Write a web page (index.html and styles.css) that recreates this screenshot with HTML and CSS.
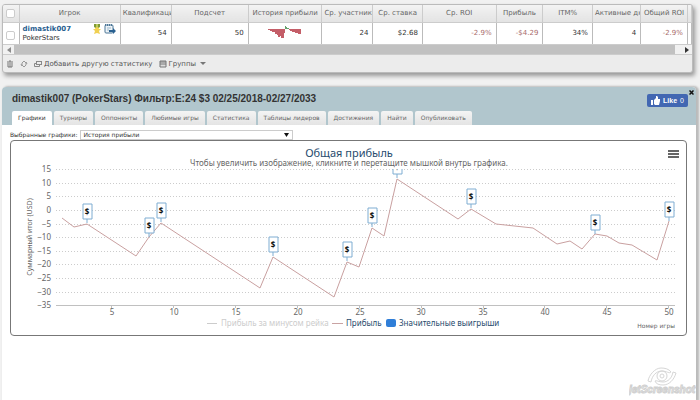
FILE: index.html
```html
<!DOCTYPE html>
<html lang="ru">
<head>
    <meta charset="UTF-8">
    <meta name="viewport" content="width=device-width, initial-scale=1.0">
    <title>dimastik007 (PokerStars)</title>
    <link rel="stylesheet" href="styles.css">
</head>
<body>
    <!-- Player grid -->
    <section class="grid-panel">
        <table class="grid">
            <colgroup>
                <col class="col-check"><col class="col-player"><col class="col-qual"><col class="col-count">
                <col class="col-history"><col class="col-entrants"><col class="col-stake"><col class="col-roi">
                <col class="col-profit"><col class="col-itm"><col class="col-active"><col class="col-total"><col>
            </colgroup>
            <thead>
                <tr>
                    <th><input class="tick" type="checkbox" aria-label="Выбрать все"></th>
                    <th>Игрок</th>
                    <th>Квалификация</th>
                    <th>Подсчет</th>
                    <th>История прибыли</th>
                    <th>Ср. участников</th>
                    <th>Ср. ставка</th>
                    <th>Ср. ROI</th>
                    <th>Прибыль</th>
                    <th>ITM%</th>
                    <th>Активные дни</th>
                    <th>Общий ROI</th>
                    <th></th>
                </tr>
            </thead>
            <tbody>
                <tr>
                    <td class="check"><input class="tick" type="checkbox" aria-label="Выбрать dimastik007"></td>
                    <td class="player">
                        <div class="player-top">
                            <a class="player-name" href="#">dimastik007</a>
                            <svg class="medal" viewBox="0 0 8 10">
                                <path d="M1 0h6v3L4 5 1 3z" fill="#7f9a35"/>
                                <path d="M3 0h2v3H3z" fill="#b9c95e"/>
                                <circle cx="4" cy="5" r="2" fill="#f5d94e"/>
                                <path d="M4 4l1 1 3 0-2 2 1 3-3-1-3 1 1-3-2-2h3z" fill="#f0d052"/>
                            </svg>
                            <svg class="export" viewBox="0 0 12 10">
                                <rect x="1" y="1" width="8" height="8" rx="1" fill="#eef4f8" stroke="#4d7797"/>
                                <path d="M1 1h8" stroke="#4d7797" stroke-width="2" stroke-dasharray="1 1"/>
                                <path d="M3 4h4M3 6h2" stroke="#9db9cb"/>
                                <path d="M5 6h4V4l3 3-3 3V8H5z" fill="#2a6191"/>
                            </svg>
                        </div>
                        <div class="site">PokerStars</div>
                    </td>
                    <td>54</td>
                    <td>50</td>
                    <td class="spark-cell">
                        <svg class="spark" viewBox="0 0 34 13">
                            <path d="M0 3h17v4h-1v5h-3v-2h-1v1h-2V9H9V8H7V6H4V5H2V4H0zM21 3h12v5h-3V7h-3V6h-3V5h-2V4h-1z" fill="#c45e68"/>
                            <path d="M17 3V0h1v1h1v1h2v1z" fill="#67a06d"/>
                        </svg>
                    </td>
                    <td>24</td>
                    <td>$2.68</td>
                    <td class="loss">-2.9%</td>
                    <td class="loss">-$4.29</td>
                    <td>34%</td>
                    <td>4</td>
                    <td class="loss">-2.9%</td>
                    <td></td>
                </tr>
            </tbody>
        </table>
        <div class="scrollbar">
            <button class="scroll-btn" type="button" aria-label="Влево"><svg viewBox="0 0 4 6"><path d="M4 0v6L0 3z" fill="#8c8c8c"/></svg></button>
            <div class="scroll-thumb"></div>
            <button class="scroll-btn" type="button" aria-label="Вправо"><svg viewBox="0 0 4 6"><path d="M0 0v6l4-3z" fill="#333"/></svg></button>
        </div>
        <div class="grid-tools">
            <button class="tool" type="button" aria-label="Удалить">
                <svg class="tool-icon" viewBox="0 0 8 8"><path d="M1 2h6M3 1h2M2 3v4h4V3M4 3v4" fill="none" stroke="#777"/></svg>
            </button>
            <button class="tool" type="button" aria-label="Обновить">
                <svg class="tool-icon" viewBox="0 0 8 8"><path d="M2 6V3l2-2 1 1M6 2v3L4 7 3 6M1 4l1 2 1-1M5 3l1-1 1 2" fill="none" stroke="#999"/></svg>
            </button>
            <button class="tool" type="button">
                <svg class="tool-icon" viewBox="0 0 8 8"><rect x="2.5" y="1.5" width="5" height="3" fill="none" stroke="#888"/><path d="M2 3.500H.5v3h5V5" fill="none" stroke="#888"/></svg>
                Добавить другую статистику
            </button>
            <button class="tool groups" type="button">
                <svg class="tool-icon" viewBox="0 0 8 8"><path d="M1 1h6v6H1z" fill="#ddd" stroke="#777"/><path d="M1 2h6M1 4h6" stroke="#777"/></svg>
                Группы
                <svg class="caret" viewBox="0 0 6 3"><path d="M0 0h6L3 3z" fill="#777"/></svg>
            </button>
        </div>
    </section>

    <!-- Player details -->
    <section class="detail-panel">
        <header class="detail-head">
            <button class="close" type="button" aria-label="Закрыть">
                <svg viewBox="0 0 5 5"><path d="M.5.5l4 4M4.500.5l-4 4" stroke="#111" stroke-width="1.500"/></svg>
            </button>
            <div class="title-row">
                <h1>dimastik007 (PokerStars) Фильтр:E:24 $3 02/25/2018-02/27/2033</h1>
                <button class="like" type="button">
                    <svg viewBox="0 0 9 9"><path d="M0 4h2v5H0zM3 4l2-2V0h1l1 1v2h2v2L8 9H4L3 8z" fill="#fff"/></svg>
                    <b>Like</b> 0
                </button>
            </div>
            <nav class="tabs">
                <a class="tab active" href="#">Графики</a>
                <a class="tab" href="#">Турниры</a>
                <a class="tab" href="#">Оппоненты</a>
                <a class="tab" href="#">Любимые игры</a>
                <a class="tab" href="#">Статистика</a>
                <a class="tab" href="#">Таблицы лидеров</a>
                <a class="tab" href="#">Достижения</a>
                <a class="tab" href="#">Найти</a>
                <a class="tab" href="#">Опубликовать</a>
            </nav>
        </header>

        <div class="chart-pick">
            <label for="chartSelect">Выбранные графики:</label>
            <select id="chartSelect" class="chart-select">
                <option>История прибыли</option>
            </select>
        </div>

        <!-- Profit chart -->
        <div class="chart-box">
            <button class="chart-menu" type="button" aria-label="Меню графика"><span></span><span></span><span></span></button>
            <svg class="chart" viewBox="0 0 675 194">
                <defs>
                    <clipPath id="plotArea"><rect x="44" y="28" width="631" height="137"/></clipPath>
                    <g id="flag">
                        <path class="flag-line" d="M0 0v-4M-4-19h9v15h-9z"/>
                        <text class="flag-text" x="0" y="-8">$</text>
                    </g>
                </defs>
                <text class="chart-title" x="338" y="16">Общая прибыль</text>
                <text class="chart-subtitle" x="338" y="25">Чтобы увеличить изображение, кликните и перетащите мышкой внутрь графика.</text>

                <path class="grid-line" d="M45 28.500h619M45 42.500h619M45 55.500h619M45 69.500h619M45 83.500h619M45 96.500h619M45 110.500h619M45 123.500h619M45 137.500h619M45 151.500h619"/>
                <path class="axis-line" d="M45 164.500h619M100.500 164v3M162.500 164v3M224.500 164v3M286.500 164v3M348.500 164v3M410.500 164v3M472.500 164v3M533.500 164v3M595.500 164v3M657.500 164v3"/>

                <g class="y-labels">
                    <text x="40" y="31">15</text>
                    <text x="40" y="45">10</text>
                    <text x="40" y="58">5</text>
                    <text x="40" y="72">0</text>
                    <text x="40" y="86">−5</text>
                    <text x="40" y="99">−10</text>
                    <text x="40" y="113">−15</text>
                    <text x="40" y="126">−20</text>
                    <text x="40" y="140">−25</text>
                    <text x="40" y="154">−30</text>
                    <text x="40" y="167">−35</text>
                </g>
                <g class="x-labels">
                    <text x="101" y="174">5</text>
                    <text x="163" y="174">10</text>
                    <text x="225" y="174">15</text>
                    <text x="287" y="174">20</text>
                    <text x="349" y="174">25</text>
                    <text x="410" y="174">30</text>
                    <text x="472" y="174">35</text>
                    <text x="534" y="174">40</text>
                    <text x="596" y="174">45</text>
                    <text x="658" y="174">50</text>
                </g>
                <text class="y-title" transform="translate(21 96) rotate(-90)">Суммарный итог (USD)</text>
                <text class="x-title" x="664" y="187">Номер игры</text>

                <g clip-path="url(#plotArea)">
                    <polyline class="profit-line" points="51,77 63,86 76,83 125,115 138,96 150,82 249,147 262,116 323,156 336,121 348,126 361,87 373,95 386,38 447,78 460,68 485,83 522,87 546,103 559,100 571,108 584,93 596,95 608,102 621,104 646,119 658,80"/>
                    <use href="#flag" x="76" y="82"/>
                    <use href="#flag" x="138" y="96"/>
                    <use href="#flag" x="150" y="81"/>
                    <use href="#flag" x="262" y="115"/>
                    <use href="#flag" x="336" y="120"/>
                    <use href="#flag" x="361" y="86"/>
                    <use href="#flag" x="386" y="37"/>
                    <use href="#flag" x="460" y="67"/>
                    <use href="#flag" x="584" y="93"/>
                    <use href="#flag" x="658" y="80"/>
                </g>

                <g class="legend">
                    <path d="M196 182.500h10" stroke="#ccc"/>
                    <text class="off" x="210" y="185">Прибыль за минусом рейка</text>
                    <path d="M321 182.500h11" stroke="#c9a3a3"/>
                    <text x="335" y="185">Прибыль</text>
                    <rect x="375" y="178" width="10" height="8" rx="2" fill="#2f7ed8"/>
                    <text x="388" y="185">Значительные выигрыши</text>
                </g>
            </svg>
        </div>
    </section>

    <svg class="watermark" viewBox="0 0 70 30">
        <g fill="none" stroke="#d6d6d6">
            <circle cx="33" cy="10" r="5"/>
            <circle cx="33" cy="10" r="2"/>
            <path d="M32 2C26 2 20 9 19 15l3 1c1-6 5-11 11-11 4 0 8 3 9 1-2-3-6-4-10-4z"/>
            <path d="M34 19c6 0 11-5 13-12l-3-1c-1 6-5 10-10 10-4 0-7-2-8-1 1 3 4 4 8 4z"/>
        </g>
        <text x="0" y="27">jetScreenshot</text>
    </svg>
</body>
</html>
```
FILE: styles.css
```css
* {
    box-sizing: border-box;
}

body {
    margin: 0;
    padding: 4px 4px 0 2px;
    min-height: 100vh;
    display: flex;
    flex-direction: column;
    gap: 14px;
    background-color: #f1f1f1;
    font-family: "DejaVu Sans", Verdana, sans-serif;
    font-size: 7px;
    line-height: 8px;
    color: #333;
    overflow-x: hidden;
}

button {
    border: none;
    padding: 0;
    background: none;
    font: inherit;
    color: inherit;
    cursor: pointer;
}

/* Player grid */
.grid-panel {
    margin-right: 3px;
    border: 1px solid #bbb;
    border-radius: 3px;
    background-color: #ececec;
    box-shadow: 2px 3px 4px #999;
    overflow: hidden;
}

.grid {
    width: 100%;
    table-layout: fixed;
    border-collapse: collapse;
}

.col-check { width: 16px; }
.col-player { width: 14.7%; }
.col-qual { width: 7.4%; }
.col-count { width: 11.2%; }
.col-history { width: 10.7%; }
.col-entrants { width: 7.4%; }
.col-stake { width: 7.2%; }
.col-roi { width: 10.7%; }
.col-profit { width: 6.8%; }
.col-itm { width: 7.2%; }
.col-active { width: 7%; }
.col-total { width: 6.8%; }

.grid th {
    height: 17px;
    padding: 0 2px;
    border-right: 1px solid #ccc;
    border-bottom: 1px solid #ccc;
    background-image: linear-gradient(#f3f3f3, #e3e3e3);
    font-weight: normal;
    color: #666;
    white-space: nowrap;
    overflow: hidden;
}

.grid td {
    height: 22px;
    padding: 0 4px;
    border-right: 1px solid #bbb;
    background-color: #fff;
    text-align: right;
}

.grid .check {
    padding: 4px 2px 0;
    text-align: center;
}

.grid .player {
    padding: 0 4px 0 3px;
    text-align: left;
}

.grid .loss {
    color: #a86b6b;
}

.grid .spark-cell {
    text-align: center;
}

.tick {
    appearance: none;
    display: block;
    width: 9px;
    height: 9px;
    margin: 0 auto;
    border: 1px solid #ccc;
    border-radius: 2px;
    background-color: #fff;
}

.player-top {
    display: flex;
    align-items: center;
    gap: 3px;
}

.player-name {
    margin-right: auto;
    font-weight: bold;
    color: #2a6191;
    text-decoration: none;
}

.medal {
    width: 8px;
    height: 10px;
}

.export {
    width: 12px;
    height: 10px;
}

.spark {
    width: 34px;
    height: 13px;
}

/* Horizontal scrollbar under the grid */
.scrollbar {
    display: flex;
    align-items: center;
    height: 11px;
    border-top: 1px solid #ccc;
    border-bottom: 1px solid #ccc;
    background-color: #f1f1f1;
}

.scroll-btn {
    width: 11px;
    height: 9px;
    display: flex;
    align-items: center;
    justify-content: center;
}

.scroll-btn svg {
    width: 4px;
    height: 6px;
}

.scroll-thumb {
    flex: 1;
    height: 9px;
    margin-right: 6px;
    background-color: #c1c1c1;
}

.grid-tools {
    display: flex;
    align-items: center;
    gap: 6px;
    height: 17px;
    padding: 0 3px;
    color: #555;
}

.tool {
    display: flex;
    align-items: center;
    gap: 2px;
}

.tool-icon {
    width: 8px;
    height: 8px;
}

.caret {
    width: 6px;
    height: 3px;
    margin-left: 2px;
}

/* Player details */
.detail-panel {
    flex: 1;
    border-radius: 4px 4px 0 0;
    background-color: #fff;
    box-shadow: 2px 0 2px 1px #bbb;
}

.detail-head {
    position: relative;
    padding: 5px 8px 0 10px;
    border-radius: 4px 4px 0 0;
    background-color: #b1c6cd;
}

.close {
    position: absolute;
    top: 3px;
    right: 2px;
    width: 5px;
    height: 5px;
    display: flex;
}

.title-row {
    display: flex;
    justify-content: space-between;
    align-items: flex-start;
    height: 19px;
}

h1 {
    margin: 0;
    font-family: "Liberation Sans", Arial, sans-serif;
    font-size: 10px;
    line-height: 14px;
    color: #333;
}

.like {
    display: flex;
    align-items: center;
    gap: 3px;
    height: 13px;
    margin-top: 2px;
    padding: 0 4px;
    border-radius: 2px;
    background-color: #4267b2;
    font-family: "Liberation Sans", Arial, sans-serif;
    color: #fff;
}

.like svg {
    width: 9px;
    height: 9px;
}

.tabs {
    display: flex;
    gap: 2px;
}

.tab {
    height: 14px;
    padding: 0 6px;
    border-radius: 2px 2px 0 0;
    background-image: linear-gradient(#f4f4f4, #e4e4e4);
    font-family: "DejaVu Sans", Verdana, sans-serif;
    font-size: 6px;
    line-height: 14px;
    color: #666;
    text-decoration: none;
    white-space: nowrap;
}

.tab.active {
    background-image: none;
    background-color: #fff;
    color: #333;
}

.chart-pick {
    display: flex;
    align-items: flex-end;
    gap: 3px;
    padding: 5px 8px 0;
}

.chart-select {
    appearance: none;
    width: 213px;
    height: 10px;
    padding: 0 2px;
    border: 1px solid #ccc;
    border-radius: 0;
    background: #fff url("data:image/svg+xml,%3Csvg xmlns='http://www.w3.org/2000/svg' width='5' height='4' viewBox='0 0 5 4'%3E%3Cpath d='M0 0h5L2.5 4z' fill='%23111'/%3E%3C/svg%3E") no-repeat right 3px center;
    font: inherit;
    font-size: 6px;
    color: #333;
}

.chart-pick label {
    font-size: 6px;
    line-height: 10px;
}

/* Profit chart */
.chart-box {
    position: relative;
    margin: 0 9px 0 8px;
    border: 1px solid #777;
    border-radius: 4px;
}

.chart {
    display: block;
    width: 100%;
    height: auto;
}

.chart text {
    font-family: "Noto Sans", "Lucida Grande", sans-serif;
    font-size: 8px;
    fill: #666;
}

.chart .chart-title {
    font-size: 11px;
    fill: #274b6d;
    text-anchor: middle;
}

.chart .chart-subtitle {
    text-anchor: middle;
}

.grid-line {
    fill: none;
    stroke: #ccc;
    stroke-dasharray: 1 2;
}

.axis-line {
    fill: none;
    stroke: #c0c0c0;
}

.y-labels {
    text-anchor: end;
}

.x-labels {
    text-anchor: middle;
}

.chart .y-title {
    font-size: 7px;
    text-anchor: middle;
}

.chart .x-title {
    font-family: "DejaVu Sans", Verdana, sans-serif;
    font-size: 6px;
    text-anchor: end;
}

.profit-line {
    fill: none;
    stroke: #c9a0a0;
}

.flag-line {
    fill: #fff;
    stroke: #7fadd2;
}

.chart .flag-text {
    font-weight: bold;
    fill: #111;
    text-anchor: middle;
}

.chart .legend text {
    fill: #274b6d;
}

.chart .legend .off {
    fill: #ccc;
}

.chart-menu {
    position: absolute;
    top: 9px;
    right: 7px;
    width: 11px;
    display: flex;
    flex-direction: column;
    gap: 1px;
}

.chart-menu span {
    width: 11px;
    height: 2px;
    background-color: #666;
}

.watermark {
    position: absolute;
    right: 1px;
    bottom: 4px;
    width: 70px;
    height: 30px;
}

.watermark text {
    font-family: "Liberation Sans", Arial, sans-serif;
    font-size: 10px;
    font-weight: bold;
    font-style: italic;
    fill: #fff;
    stroke: #d0d0d0;
}
```
